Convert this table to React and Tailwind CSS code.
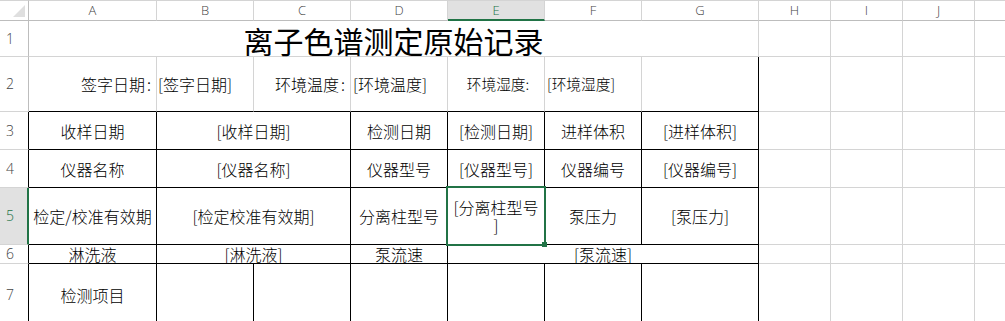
import React from 'react';

// gridline styles, written out in full so Tailwind picks them up
const GRID = 'border-r border-b border-[#d4d4d4]';
const BLK = 'border-r border-b border-black flex items-center justify-center text-center';
const TOP = 'border-r border-b border-r-[#d4d4d4] border-b-black flex items-center';
const COLH = 'border-t border-r border-b border-t-[#d4d4d4] border-r-[#d4d4d4] border-b-[#bdbdbd] flex items-center justify-center text-[#444] text-[13px] leading-none font-["Open_Sans",sans-serif]';
const ROWH = 'border-r border-b border-r-[#bdbdbd] border-b-[#d4d4d4] flex items-center pl-[6px] text-[#444] text-[14px] leading-none font-["Open_Sans",sans-serif]';
const ROWH_T = 'border-r border-b border-r-black border-b-[#d4d4d4] flex items-center pl-[6px] text-[#444] text-[14px] leading-none font-["Open_Sans",sans-serif]';

const COLS = ['A', 'B', 'C', 'D', 'E', 'F', 'G', 'H', 'I', 'J'];

function Blank() {
  return (
    <>
      <div className={GRID} />
      <div className={GRID} />
      <div className={GRID} />
      <div className="border-b border-[#d4d4d4]" />
    </>
  );
}

function Label({ text }) {
  return (
    <span>
      {text}
      <span className="ml-[2px] mr-[3px]">:</span>
    </span>
  );
}

export default function App() {
  return (
    <div className="w-[1005px] h-[321px] overflow-hidden bg-white text-black font-['Noto_Sans_CJK_SC',sans-serif]">
      <div className="grid grid-cols-[29px_128px_97px_97px_97px_97px_97px_117px_72px_72px_72px_1fr] grid-rows-[21px_36px_55px_38px_38px_57px_19px_62px] text-[16px] font-light">
        {/* column headers */}
        <div className="border-t border-r border-b border-t-[#d4d4d4] border-r-[#bdbdbd] border-b-[#bdbdbd] relative">
          <div className="absolute right-[3px] bottom-[3px] w-0 h-0 border-l-[12px] border-l-transparent border-b-[12px] border-b-[#dfdfdf]" />
        </div>
        {COLS.map((c) =>
          c === 'E' ? (
            <div
              key={c}
              className="border-t border-r border-b-2 border-t-[#d4d4d4] border-r-[#d4d4d4] border-b-[#217346] bg-[#e1e1e1] flex items-center justify-center text-[#217346] text-[13px] leading-none font-['Open_Sans',sans-serif]"
            >
              {c}
            </div>
          ) : (
            <div key={c} className={COLH}>{c}</div>
          )
        )}
        <div className="border-t border-b border-t-[#d4d4d4] border-b-[#bdbdbd]" />

        {/* row 1 */}
        <div className={ROWH}>1</div>
        <div className={`${GRID} col-span-7 flex items-center justify-center text-[30px] leading-none font-normal pt-[2px]`}>
          离子色谱测定原始记录
        </div>
        <Blank />

        {/* row 2 */}
        <div className={ROWH}>2</div>
        <div className={`${TOP} justify-end pr-[2px]`}><Label text="签字日期" /></div>
        <div className={`${TOP} pl-[1px]`}>[签字日期]</div>
        <div className={`${TOP} justify-end pr-[2px]`}><Label text="环境温度" /></div>
        <div className={`${TOP} pl-[2px]`}>[环境温度]</div>
        <div className={`${TOP} justify-center text-[14.7px] pl-[4px]`}>环境湿度:</div>
        <div className={`${TOP} pl-[2px] text-[14.7px]`}>[环境湿度]</div>
        <div className={`${TOP} border-r-black`} />
        <Blank />

        {/* row 3 */}
        <div className={ROWH_T}>3</div>
        <div className={BLK}>收样日期</div>
        <div className={`${BLK} col-span-2`}>[收样日期]</div>
        <div className={BLK}>检测日期</div>
        <div className={BLK}>[检测日期]</div>
        <div className={BLK}>进样体积</div>
        <div className={BLK}>[进样体积]</div>
        <Blank />

        {/* row 4 */}
        <div className={ROWH_T}>4</div>
        <div className={BLK}>仪器名称</div>
        <div className={`${BLK} col-span-2`}>[仪器名称]</div>
        <div className={BLK}>仪器型号</div>
        <div className={BLK}>[仪器型号]</div>
        <div className={BLK}>仪器编号</div>
        <div className={BLK}>[仪器编号]</div>
        <Blank />

        {/* row 5, E5 selected */}
        <div className="border-r-2 border-b border-r-[#217346] border-b-[#d4d4d4] bg-[#e1e1e1] flex items-center pl-[6px] text-[#217346] text-[14px] leading-none font-['Open_Sans',sans-serif]">
          5
        </div>
        <div className={`${BLK} whitespace-nowrap`}>检定/校准有效期</div>
        <div className={`${BLK} col-span-2`}>[检定校准有效期]</div>
        <div className={BLK}>分离柱型号</div>
        <div className={`${BLK} relative leading-[18px]`}>
          <span>
            [分离柱型号
            <br />]
          </span>
          <div className="absolute -inset-[2px] border-2 border-[#217346] pointer-events-none">
            <div className="absolute right-[-3px] bottom-[-3px] w-[5px] h-[5px] bg-[#217346]" />
          </div>
        </div>
        <div className={BLK}>泵压力</div>
        <div className={BLK}>[泵压力]</div>
        <Blank />

        {/* row 6 */}
        <div className={ROWH_T}>6</div>
        <div className={`${BLK} leading-none`}>淋洗液</div>
        <div className={`${BLK} col-span-2 leading-none`}>[淋洗液]</div>
        <div className={`${BLK} leading-none`}>泵流速</div>
        <div className={`${BLK} col-span-3 leading-none`}>[泵流速]</div>
        <Blank />

        {/* row 7 */}
        <div className={ROWH_T}>7</div>
        <div className={BLK}>检测项目</div>
        <div className={BLK} />
        <div className={BLK} />
        <div className={BLK} />
        <div className={BLK} />
        <div className={BLK} />
        <div className={BLK} />
        <Blank />
      </div>
    </div>
  );
}
